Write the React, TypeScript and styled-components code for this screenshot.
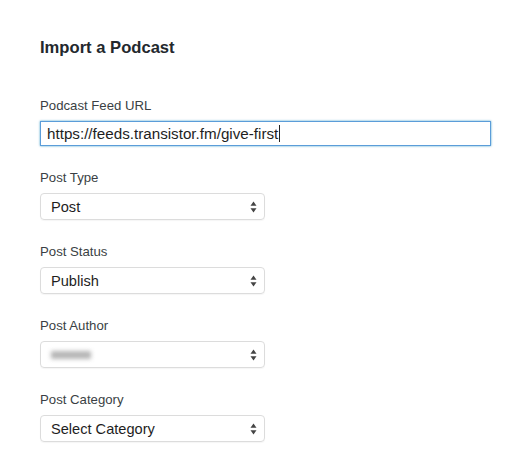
import React from 'react';
import styled, { createGlobalStyle } from 'styled-components';

const GlobalStyle = createGlobalStyle`
  html, body {
    margin: 0;
    padding: 0;
    background: #ffffff;
  }
  body {
    font-family: "Liberation Sans", Arial, sans-serif;
    color: #23282d;
  }
`;

const Page = styled.div`
  width: 530px;
  height: 455px;
  box-sizing: border-box;
  padding: 38px 0 0 40px;
`;

const Title = styled.h2`
  margin: 0 0 40px;
  font-size: 16.6px;
  font-weight: 700;
  line-height: 20px;
  color: #23282d;
`;

const Field = styled.div`
  display: flex;
  flex-direction: column;
  margin-bottom: 24px;
`;

const Label = styled.label`
  font-size: 13.2px;
  line-height: 16px;
  color: #3a3f44;
  margin-bottom: 7px;
`;

const UrlInput = styled.div`
  box-sizing: border-box;
  width: 451px;
  height: 25px;
  border: 1px solid #5b9dd9;
  box-shadow: 0 0 2px rgba(30, 140, 190, 0.8);
  padding: 0 6px;
  display: flex;
  align-items: center;
  font-size: 15.2px;
  color: #1e1e1e;
`;

const Caret = styled.span`
  display: inline-block;
  width: 1px;
  height: 17px;
  background: #222;
  margin-left: 1px;
`;

const SelectBox = styled.div`
  box-sizing: border-box;
  width: 225px;
  height: 27px;
  border: 1px solid #dcdcdc;
  border-radius: 4px;
  box-shadow: 0 1px 1px rgba(0, 0, 0, 0.04);
  padding: 0 7px 0 10px;
  display: flex;
  align-items: center;
  justify-content: space-between;
  font-size: 14.6px;
  color: #1e1e1e;
`;

const Blurred = styled.span`
  display: inline-block;
  width: 40px;
  height: 8px;
  background: #a4a4a4;
  filter: blur(2px);
  opacity: 0.8;
`;

function Arrows() {
  return (
    <svg width="7" height="12" viewBox="0 0 7 12">
      <path d="M3.5 0.5 L6.5 4.8 L0.5 4.8 Z" fill="#444" />
      <path d="M3.5 11.5 L6.5 7.2 L0.5 7.2 Z" fill="#444" />
    </svg>
  );
}

interface SelectFieldProps {
  label: string;
  value?: string;
  blurred?: boolean;
}

function SelectField(props: SelectFieldProps) {
  return (
    <Field>
      <Label>{props.label}</Label>
      <SelectBox>
        {props.blurred ? <Blurred /> : <span>{props.value}</span>}
        <Arrows />
      </SelectBox>
    </Field>
  );
}

export default function App() {
  return (
    <Page>
      <GlobalStyle />
      <Title>Import a Podcast</Title>
      <Field>
        <Label>Podcast Feed URL</Label>
        <UrlInput>
          https://feeds.transistor.fm/give-first
          <Caret />
        </UrlInput>
      </Field>
      <SelectField label="Post Type" value="Post" />
      <SelectField label="Post Status" value="Publish" />
      <SelectField label="Post Author" blurred />
      <SelectField label="Post Category" value="Select Category" />
    </Page>
  );
}
